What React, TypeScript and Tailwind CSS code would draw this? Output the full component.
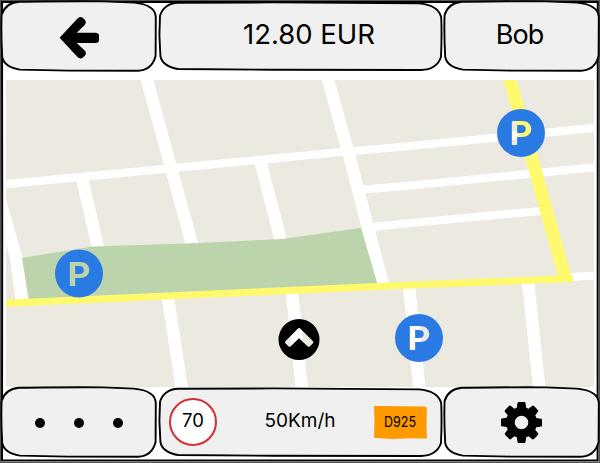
import type { ReactNode } from 'react';

const font = "font-['Inter','Liberation_Sans',sans-serif]";

type PanelShape = 'side' | 'middle';

// Hand-drawn rounded outline behind every bar cell.
function SketchBox({ shape }: { shape: PanelShape }) {
  return shape === 'side' ? (
    <svg className="absolute inset-0 h-full w-full overflow-visible" viewBox="0 0 157 72" preserveAspectRatio="none">
      <path
        d="M19 1.8 C50 1.4 77 1 103 1.4 L134 2.6 C148 4 155.5 9 155.8 17 L155.6 56 C153 66 147 70.4 138 70.7 L68 70.6 L20 69.6 C9 68 3.5 63 2.2 57 C1.4 42 1 30 1.6 15 C4 7 10 2.5 19 1.8Z"
        fill="#f0f0f0" stroke="#000" strokeWidth="1.9"
      />
    </svg>
  ) : (
    <svg className="absolute inset-0 h-full w-full overflow-visible" viewBox="0 0 284 72" preserveAspectRatio="none">
      <path
        d="M20 2.8 L115 2.4 L261 3.4 C274 4.5 281 9 283.2 17 C283.8 30 283.6 43 283 57 C280 66 273 69.8 263 70 L115 69.8 L20 69 C9 67 3.4 62 2.4 56 L1.4 35 L2 16 C4 8 11 3 20 2.8Z"
        fill="#f0f0f0" stroke="#000" strokeWidth="1.9"
      />
    </svg>
  );
}

function Cell({ shape, children }: { shape: PanelShape; children: ReactNode }) {
  return (
    <div className={`relative h-[72px] ${shape === 'side' ? 'w-[157px]' : 'w-[284px]'}`}>
      <SketchBox shape={shape} />
      <div className="relative flex h-full w-full items-center justify-center">{children}</div>
    </div>
  );
}

function ArrowLeft() {
  return (
    <svg className="mt-[3px] ml-0.5 h-[43px] w-[41px]" viewBox="0 0 41 43">
      <path d="M.6 21.8 L18.5 2.5 Q21-.4 24 2 L26 4 Q27.8 6.5 25.7 9 L17.8 16.7 H36 Q40 16.7 40 20 V24 Q40 27 36.5 27 H17.8 L25.6 34.5 Q28 37 26 39.5 L24 41.5 Q21 43.5 18.5 41Z" />
    </svg>
  );
}

function Cog() {
  return (
    <svg className="mr-px h-[41px] w-[41px]" viewBox="0 0 1536 1536">
      <g transform="translate(0 128)">
        <path d="M1024 640q0-106-75-181t-181-75-181 75-75 181 75 181 181 75 181-75 75-181zm512-109v222q0 12-8 23t-20 13l-185 28q-19 54-39 91 35 50 107 138 10 12 10 25t-9 23q-27 37-99 108t-94 71q-12 0-26-9l-138-108q-44 23-91 38-16 136-29 186-7 28-36 28h-222q-14 0-24.5-8.5t-11.5-21.5l-28-184q-49-16-90-37l-141 107q-10 9-25 9-14 0-25-11-126-114-165-168-7-10-7-23 0-12 8-23 15-21 51-66.5t54-70.5q-27-50-41-99l-183-27q-13-2-21-12.5t-8-23.5v-222q0-12 8-23t19-13l186-28q14-46 39-92-40-57-107-138-10-12-10-24 0-10 9-23 26-36 98.5-107.5t94.5-71.5q13 0 26 10l138 107q44-23 91-38 16-136 29-186 7-28 36-28h222q14 0 24.5 8.5t11.5 21.5l28 184q49 16 90 37l142-107q9-9 24-9 13 0 25 10 129 119 165 170 7 8 7 22 0 12-8 23-15 21-51 66.5t-54 70.5q26 50 41 98l183 28q13 2 21 12.5t8 23.5z" />
      </g>
    </svg>
  );
}

const streets = [
  'M146.5 78 L167.5 155 L192.5 246',
  'M327.5 78 L349 155 L368.5 230 L384 288',
  'M82 178 L99 252',
  'M260 160 L282 245',
  'M-6 180 L16 257 L22 302',
  'M168 298 L182 390',
  'M292 292 L302 390',
  'M409 286 L419.5 390',
  'M528 281 L539.5 390',
];

const lanes = [
  'M2 184.5 L200 165.5 L342 152 L400 147 L598 127.5',
  'M363 189.5 L400 186.5 L598 167',
  'M373 227 L400 224 L541 211',
  'M570 277 L598 275.5',
];

const pins = [
  { id: 'pin-park', x: 79, y: 273.5 },
  { id: 'pin-avenue', x: 521, y: 133 },
  { id: 'pin-south', x: 419, y: 338 },
];

// The letter is punched out of the disc, so the map shows through it.
function ParkingPin({ id, x, y }: { id: string; x: number; y: number }) {
  return (
    <g transform={`translate(${x} ${y})`}>
      <mask id={id} maskUnits="userSpaceOnUse" x="-25" y="-25" width="50" height="50">
        <rect x="-25" y="-25" width="50" height="50" fill="#fff" />
        <text transform="translate(-11.6 12) scale(1.08 1)" fontSize="33" className="font-['Inter',sans-serif] font-bold" fill="#000">P</text>
      </mask>
      <circle r="24" fill="#2a7ae4" mask={`url(#${id})`} />
    </g>
  );
}

function StreetMap() {
  return (
    <svg className="block h-[307px] w-[588px]" viewBox="6 80 588 307">
      <rect x="6" y="80" width="588" height="307" fill="#ece9e1" />
      <g fill="none" stroke="#fff" strokeWidth="12.3">
        {streets.map((d) => <path key={d} d={d} />)}
      </g>
      <g fill="none" stroke="#fff" strokeWidth="8">
        {lanes.map((d) => <path key={d} d={d} />)}
      </g>
      <path d="M22 258 L92 246.5 L200 243 L282 239 L361 228 L377.5 284 L29 299Z" fill="#bcd4ac" />
      <g fill="none" stroke="#fff96e">
        <path d="M2 303.5 L200 294.5 L400 285.5 L573 278.5" strokeWidth="7.2" />
        <path d="M509.5 78 L531 155 L566 281" strokeWidth="12.8" />
      </g>
      {pins.map((p) => <ParkingPin key={p.id} {...p} />)}
      <path
        fillRule="evenodd"
        d="M299 319 a20.5 20.5 0 1 1 0 41 a20.5 20.5 0 1 1 0-41Z M298 328.4 L285.4 341.2 Q284.6 342.2 285.4 343.2 L288.6 346.4 Q289.5 347.2 290.5 346.4 L299 338.2 L307.8 346.4 Q308.8 347.2 309.7 346.4 L313 343.2 Q313.8 342.2 313 341.2 L300.2 328.4 Q299.1 327.4 298 328.4Z"
      />
    </svg>
  );
}

// Double, slightly uneven line around the whole screen.
function Frame() {
  return (
    <svg className="pointer-events-none absolute inset-0 h-full w-full" viewBox="0 0 600 463" fill="none">
      <path d="M0 .6 H600 M.4 0 V463 M599.5 0 V463 M0 462.5 H600" stroke="#555" strokeWidth="1.2" />
      <path d="M2 2 L597.8 2 L597.6 460.6 L2 460.6 L2.2 230Z" stroke="#000" strokeWidth="2" />
    </svg>
  );
}

export default function App() {
  return (
    <main className={`relative flex h-[463px] w-[600px] flex-col overflow-hidden bg-white text-black ${font}`}>
      <Frame />
      <header className="relative flex gap-px">
        <Cell shape="side"><ArrowLeft /></Cell>
        <Cell shape="middle"><span className="-mt-0.5 pl-[18px] text-[27.5px] whitespace-nowrap">12.80 EUR</span></Cell>
        <Cell shape="side"><span className="-mt-0.5 pr-1 text-[27px] tracking-[-1px]">Bob</span></Cell>
      </header>
      <section className="relative mt-2 h-[306px] px-1.5"><StreetMap /></section>
      <footer className="relative flex gap-px">
        <Cell shape="side">
          <div className="mt-0.5 flex gap-[29px]">
            <i className="size-2.5 rounded-full bg-black" />
            <i className="size-2.5 rounded-full bg-black" />
            <i className="size-2.5 rounded-full bg-black" />
          </div>
        </Cell>
        <Cell shape="middle">
          <div className="flex w-full items-center justify-between pr-[15px] pl-[11px]">
            <span className="flex size-12 items-center justify-center rounded-full border-2 border-[#d32f2f] bg-white pb-0.5 text-[18.5px]">70</span>
            <span className="-mt-px pl-[9px] text-[19px]">50Km/h</span>
            <svg className="h-[33px] w-[53px]" viewBox="0 0 53 33">
              <path d="M0 0 L27 .3 L51 .6 Q53 1 52.8 4 L52.5 20 L53 32.4 L36 32.2 L18 33 L0 31.8 L.5 15Z" fill="#ff9900" />
              <text x="10" y="20.5" fontSize="14.5" textLength="32" lengthAdjust="spacingAndGlyphs">D925</text>
            </svg>
          </div>
        </Cell>
        <Cell shape="side"><Cog /></Cell>
      </footer>
    </main>
  );
}
